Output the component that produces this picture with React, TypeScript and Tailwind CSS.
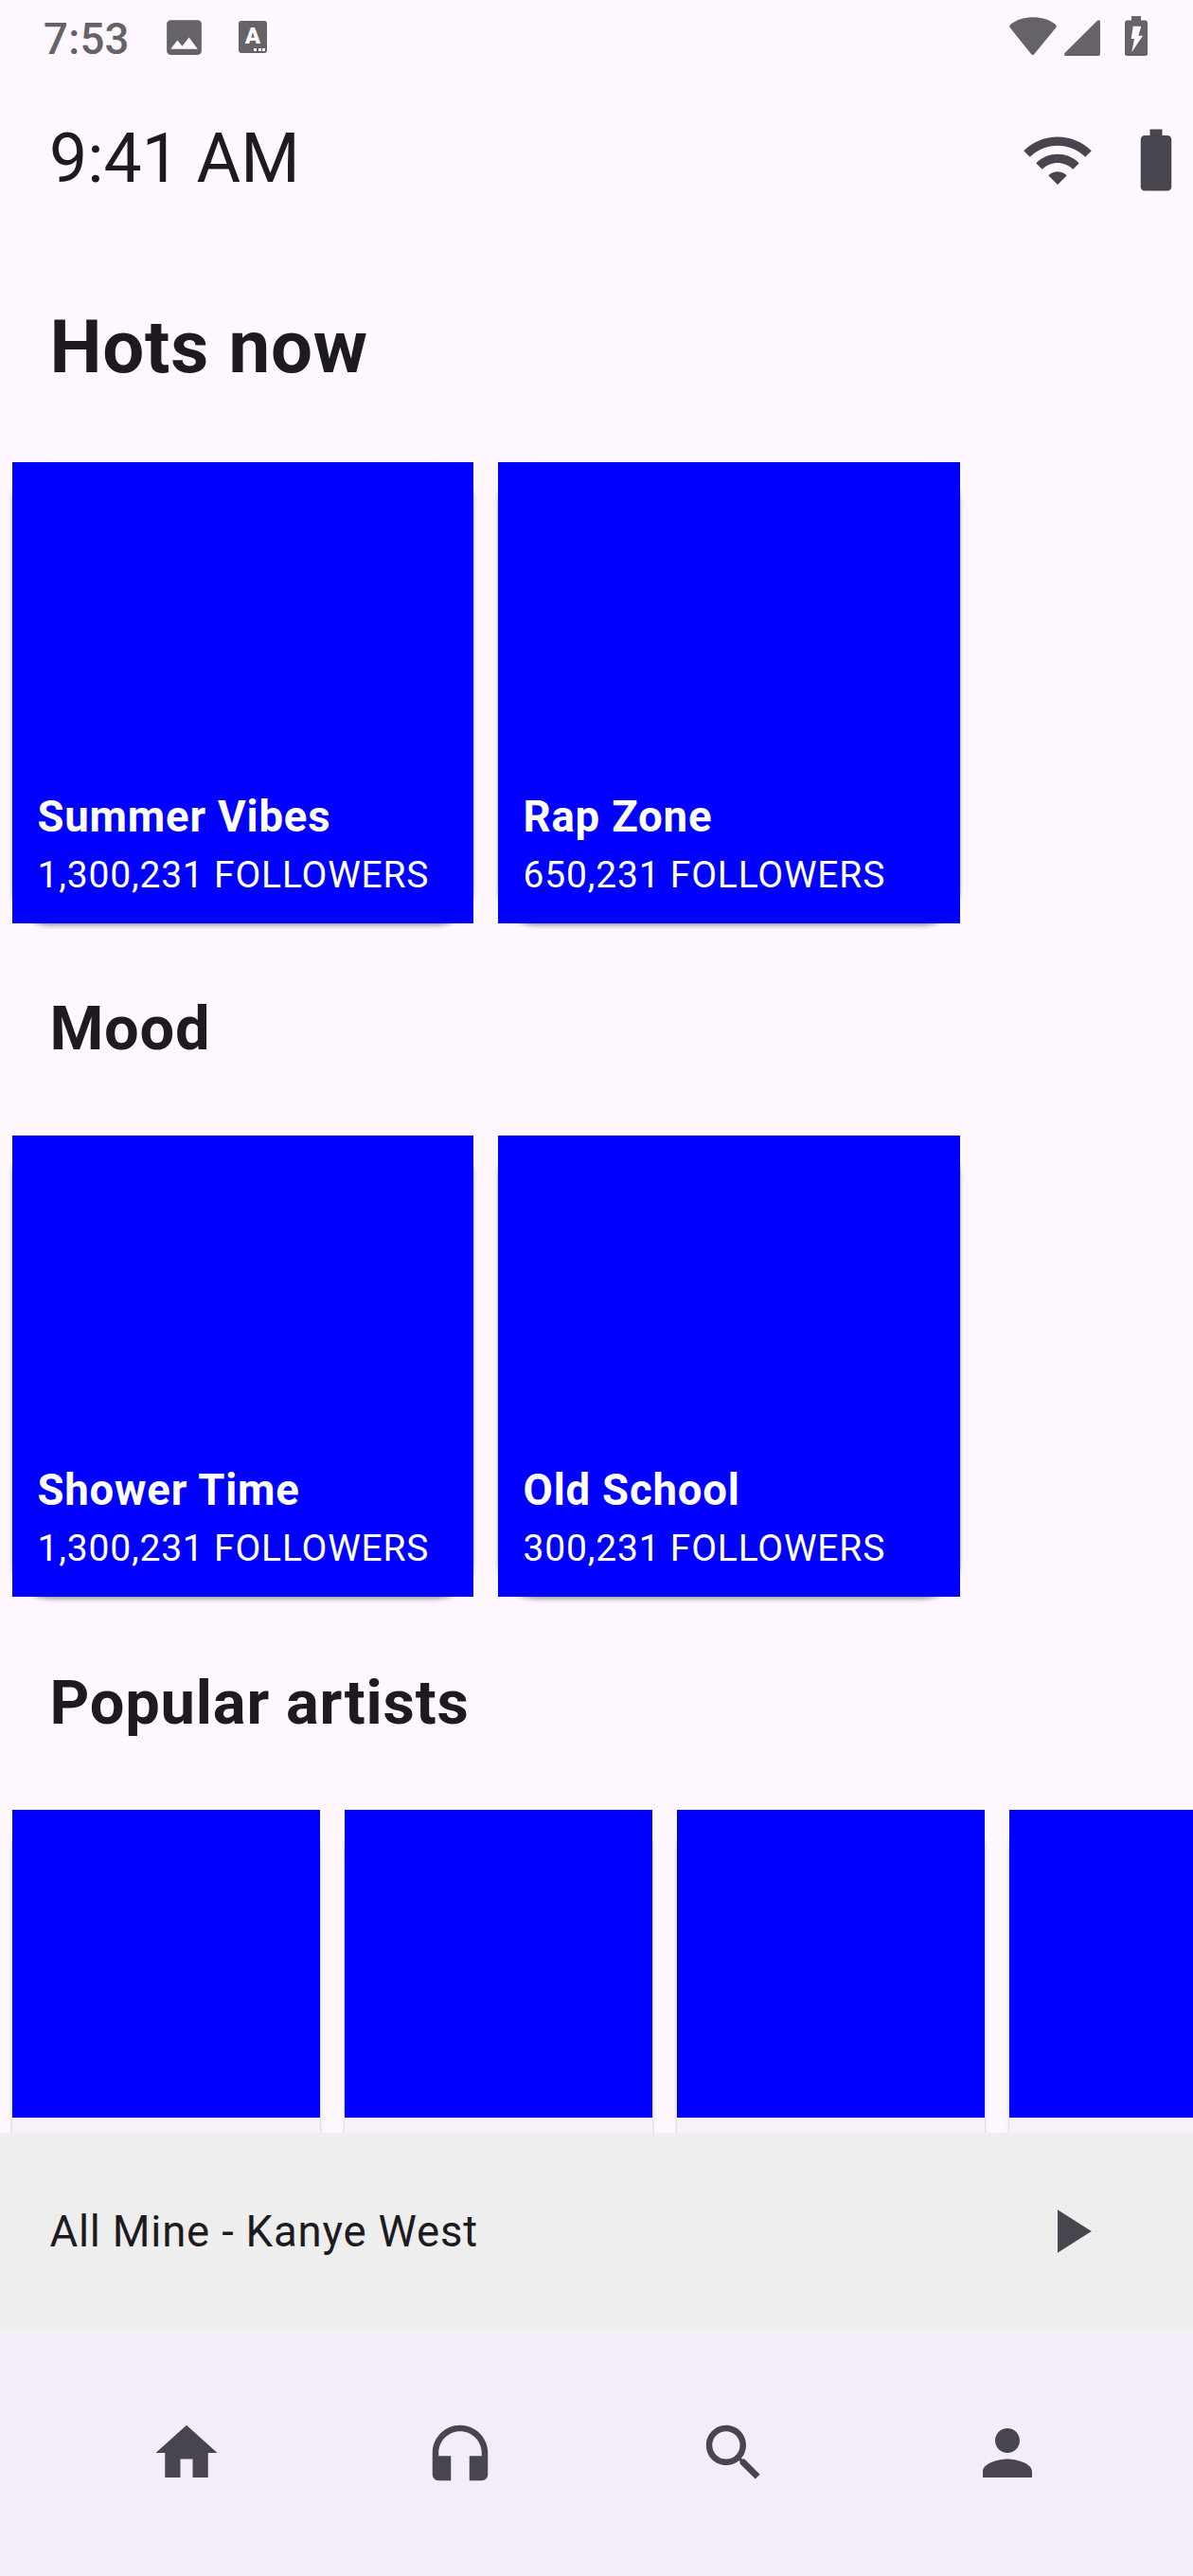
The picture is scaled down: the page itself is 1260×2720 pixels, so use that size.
import type { ReactNode } from 'react';

const ICONS = {
  wifi: 'M1 9l2 2c4.97-4.97 13.03-4.97 18 0l2-2C16.93 2.93 7.08 2.93 1 9zm8 8l3 3 3-3c-1.65-1.66-4.34-1.66-6 0zm-4-4l2 2c2.76-2.76 7.24-2.76 10 0l2-2C15.14 9.14 8.87 9.14 5 13z',
  battery: 'M15.67 4H14V2h-4v2H8.33C7.6 4 7 4.6 7 5.33v15.33C7 21.4 7.6 22 8.33 22h7.33c.74 0 1.34-.6 1.34-1.33V5.33C17 4.6 16.4 4 15.67 4z',
  play: 'M8 5v14l11-7z',
  home: 'M10 20v-6h4v6h5v-8h3L12 3 2 12h3v8z',
  headphones: 'M12 3c-4.97 0-9 4.03-9 9v7c0 1.1.9 2 2 2h4v-8H5v-1c0-3.87 3.13-7 7-7s7 3.13 7 7v1h-4v8h4c1.1 0 2-.9 2-2v-7c0-4.97-4.03-9-9-9z',
  search: 'M15.5 14h-.79l-.28-.27C15.41 12.59 16 11.11 16 9.5 16 5.91 13.09 3 9.5 3S3 5.91 3 9.5 5.91 16 9.5 16c1.61 0 3.09-.59 4.23-1.57l.27.28v.79l5 4.99L20.49 19l-4.99-5zm-6 0C7.01 14 5 11.99 5 9.5S7.01 5 9.5 5 14 7.01 14 9.5 11.99 14 9.5 14z',
  person: 'M12 12c2.21 0 4-1.79 4-4s-1.79-4-4-4-4 1.79-4 4 1.79 4 4 4zm0 2c-2.67 0-8 1.34-8 4v2h16v-2c0-2.66-5.33-4-8-4z',
  image: 'M21 19V5c0-1.1-.9-2-2-2H5c-1.1 0-2 .9-2 2v14c0 1.1.9 2 2 2h14c1.1 0 2-.9 2-2zM8.5 13.5l2.5 3.01L14.5 12l4.5 6H5l3.5-4.5z',
};

function Icon({ name, className = 'size-[78px]' }: { name: keyof typeof ICONS; className?: string }) {
  return (
    <svg viewBox="0 0 24 24" fill="currentColor" className={`shrink-0 ${className}`}>
      <path d={ICONS[name]} />
    </svg>
  );
}

function StatusBar() {
  return (
    <div className="flex h-[78px] items-center pr-12 pl-[46px] text-[#666368]">
      <span className="w-[124px] pt-[5px] text-[45.5px] leading-none font-medium tracking-[0.3px]">7:53</span>
      <Icon name="image" className="size-[49px]" />
      <div className="relative ml-[33px] h-[34px] w-[30px] rounded-[3px] bg-[#666368] text-center text-[#fef7ff]">
        <span className="block pt-[5px] text-[24px] leading-[23px] font-black">A</span>
        <div className="absolute right-[2px] bottom-[2px] flex gap-[1.5px]">
          <i className="size-[3px] bg-[#fef7ff]" />
          <i className="size-[3px] bg-[#fef7ff]" />
          <i className="size-[3px] bg-[#fef7ff]" />
        </div>
      </div>
      <div className="ml-auto flex items-center">
        <svg width="50" height="44" viewBox="0 0 50 44" fill="currentColor">
          <path d="M1 9C0 10 0 11.500 1 12.500L23 40q1.700 2 3.400 0L49 12.500C50 11.500 50 10 49 9C42 3.500 34 1.300 25 1.300S8 3.500 1 9Z" />
        </svg>
        <svg width="38" height="44" viewBox="0 0 38 44" fill="currentColor" className="ml-[8.500px]">
          <path d="M35 4.700q3-1.500 3 1.500V40q0 2-2 2H2q-3 0-1.500-3Z" />
        </svg>
        <svg width="24" height="44" viewBox="0 0 24 44" fill="currentColor" className="ml-[26px]">
          <path
            fillRule="evenodd"
            d="M7 0h10v4.500h4.500q2.500 0 2.500 2.500v32.500q0 2.500-2.500 2.500h-19q-2.500 0-2.500-2.500V7q0-2.500 2.500-2.500H7ZM8.700 10.700L6.700 24H10L7.300 38L19 20.700H14.300L17.300 10.700Z"
          />
        </svg>
      </div>
    </div>
  );
}

function Heading({ className, children }: { className: string; children: ReactNode }) {
  return (
    <h2 className={`flex items-center pl-[52.400px] leading-none font-bold tracking-[0.8125px] ${className}`}>
      {children}
    </h2>
  );
}

type Playlist = { title: string; followers: string };

const hots: Playlist[] = [
  { title: 'Summer Vibes', followers: '1,300,231 FOLLOWERS' },
  { title: 'Rap Zone', followers: '650,231 FOLLOWERS' },
];
const moods: Playlist[] = [
  { title: 'Shower Time', followers: '1,300,231 FOLLOWERS' },
  { title: 'Old School', followers: '300,231 FOLLOWERS' },
];

function PlaylistRow({ items }: { items: Playlist[] }) {
  return (
    <div className="flex gap-[26px] pl-[13px]">
      {items.map((p) => (
        <div
          key={p.title}
          className="h-[487px] w-[487px] rounded-[39px] shadow-[0_3px_4px_rgba(0,0,0,0.3),0_1px_2px_rgba(0,0,0,0.08)] last:w-[488px]"
        >
          <div className="flex h-full flex-col justify-end bg-[#0000ff] pb-[25px] pl-[26.500px] tracking-[0.8125px] whitespace-nowrap text-white">
            <div className="text-[45.500px] leading-[70px] font-bold">{p.title}</div>
            <div className="text-[39px] leading-[52px]">{p.followers}</div>
          </div>
        </div>
      ))}
    </div>
  );
}

export default function App() {
  return (
    <div className="flex h-[2720px] w-[1260px] flex-col overflow-hidden bg-[#fef7ff] font-[Roboto,sans-serif] text-[#1d1b20]">
      <StatusBar />
      <header className="flex h-[181px] items-center justify-between pl-[52px]">
        <span className="pb-[2px] text-[71.500px] leading-none">9:41 AM</span>
        <div className="flex gap-[26px] text-[#49454f]">
          <Icon name="wifi" />
          <Icon name="battery" />
        </div>
      </header>

      <Heading className="h-[229px] pb-[14px] text-[78px]">Hots now</Heading>
      <PlaylistRow items={hots} />
      <Heading className="h-[224px] pb-[2px] text-[65px]">Mood</Heading>
      <PlaylistRow items={moods} />
      <Heading className="h-[225px] pb-[1px] text-[65px]">Popular artists</Heading>

      <div className="flex h-[341px] gap-[26px] overflow-hidden pl-[13px]">
        {[0, 1, 2, 3].map((i) => (
          <div
            key={i}
            className="h-[420px] w-[325px] shrink-0 rounded-[39px] bg-[#f7f2fa] shadow-[0_3px_4px_rgba(0,0,0,0.15),0_0_2px_rgba(0,0,0,0.15)]"
          >
            <div className="size-[325px] bg-[#0000ff]" />
          </div>
        ))}
      </div>

      <div className="flex h-[208px] items-center justify-between bg-[#eeeeee] pr-[91px] pl-[52px]">
        <span className="pt-[2px] pl-[0.400px] text-[45.500px] leading-none tracking-[0.8125px]">
          All Mine - Kanye West
        </span>
        <Icon name="play" className="size-[78px] text-[#49454f]" />
      </div>

      <nav className="flex h-[260px] items-center bg-[#f3edf7] px-[52px] text-[#49454f]">
        {(['home', 'headphones', 'search', 'person'] as const).map((name) => (
          <button key={name} aria-label={name} className="flex h-full flex-1 items-center justify-center">
            <Icon name={name} />
          </button>
        ))}
      </nav>
    </div>
  );
}
